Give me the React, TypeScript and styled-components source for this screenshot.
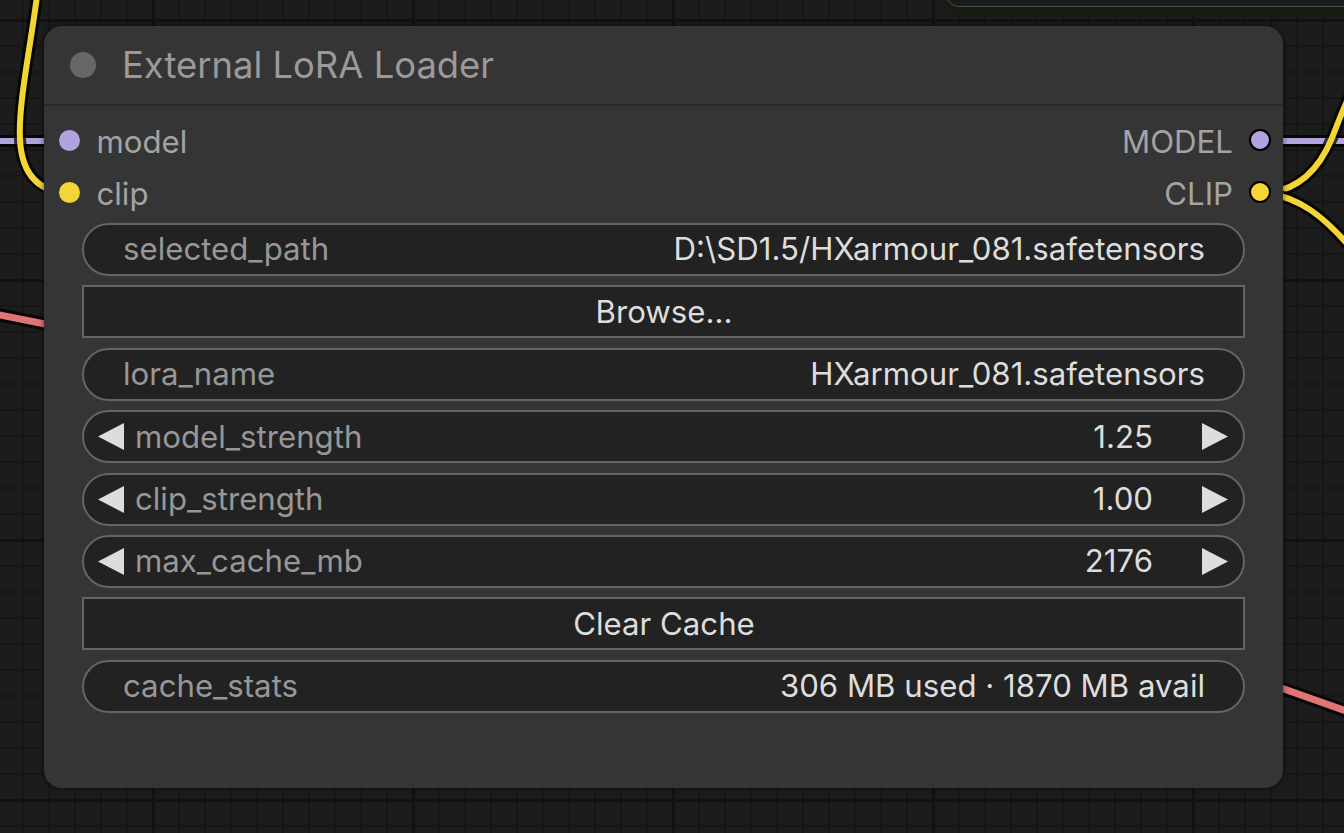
import React from "react";
import styled, { createGlobalStyle } from "styled-components";

const Global = createGlobalStyle`
  html, body { margin: 0; padding: 0; width: 1344px; height: 833px; overflow: hidden; background: #1c1c1c; }
  * { box-sizing: border-box; }
`;

const Canvas = styled.div`
  position: relative;
  width: 1344px;
  height: 833px;
  overflow: hidden;
  font-family: Inter, "Noto Sans", sans-serif;
  background-color: #1c1c1c;
  background-image:
    linear-gradient(to right, #121212 3px, transparent 3px),
    linear-gradient(to bottom, #121212 3px, transparent 3px),
    linear-gradient(to right, #161616 2px, transparent 2px),
    linear-gradient(to bottom, #161616 2px, transparent 2px);
  background-size: 260px 260px, 260px 260px, 26px 26px, 26px 26px;
  background-position: 152px 0, 0 19px, 22px 0, 0 19px;
`;

const Wires = styled.svg`
  position: absolute;
  inset: 0;
  width: 1344px;
  height: 833px;
`;

const GhostNode = styled.div`
  position: absolute;
  left: 945px;
  top: -100px;
  width: 520px;
  height: 107px;
  border-radius: 14px;
  background: #1b1b1b;
  border: 1px solid #4a4d4a;
  box-shadow: 0 11px 4px -2px #151c10;
`;

const Node = styled.div`
  position: absolute;
  display: flex;
  flex-direction: column;
  border-radius: 18px;
  background: #353535;
  box-shadow: 0 0 5px 1px rgba(0, 0, 0, 0.45);
`;

const TitleBar = styled.div`
  height: 80px;
  flex: none;
  display: flex;
  align-items: center;
  gap: 27px;
  padding: 0 0 0 26px;
  border-bottom: 2px solid #2b2b2b;
`;

const TitleDot = styled.span`
  width: 26px;
  height: 26px;
  border-radius: 50%;
  background: #676767;
`;

const Title = styled.span`
  font-size: 36.4px;
  color: #9a9a9a;
  margin-left: -1px;
`;

const Body = styled.div`
  display: flex;
  flex-direction: column;
  padding-top: 8.4px;
`;

const SlotRow = styled.div`
  height: 52px;
  display: flex;
  align-items: center;
  justify-content: space-between;
  padding: 0 12px 0 14.5px;
`;

const Slot = styled.div<{ $out?: boolean }>`
  display: flex;
  align-items: center;
  flex-direction: ${(p) => (p.$out ? "row-reverse" : "row")};
  gap: ${(p) => (p.$out ? "16px" : "17px")};
`;

const SlotDot = styled.span<{ $color: string; $out?: boolean }>`
  width: ${(p) => (p.$out ? "22px" : "21px")};
  height: ${(p) => (p.$out ? "22px" : "21px")};
  border-radius: 50%;
  background: ${(p) => p.$color};
  border: ${(p) => (p.$out ? "2.5px solid #000" : "none")};
`;

const SlotLabel = styled.span`
  font-size: 31.2px;
  color: #a3a3a3;
  line-height: 1;
  padding-top: 5px;
`;

const Widgets = styled.div`
  display: flex;
  flex-direction: column;
  gap: 9.4px;
  padding: 4.6px 38px 0;
`;

const Field = styled.div<{ $square?: boolean }>`
  height: 53px;
  display: flex;
  align-items: center;
  background: #222222;
  border: 2px solid #646464;
  border-radius: ${(p) => (p.$square ? "0" : "27px")};
  font-size: 31.2px;
  padding: 0 38px 0 39px;
  gap: 11px;
`;

const NumberField = styled(Field)`
  padding: 0 15px 0 14px;
`;

const Label = styled.span`
  color: #979797;
  white-space: nowrap;
`;

const Value = styled.span`
  color: #dddddd;
  margin-left: auto;
  white-space: nowrap;
`;

const NumValue = styled(Value)`
  margin-right: 38px;
`;

const ButtonText = styled.span`
  flex: 1;
  text-align: center;
  color: #dddddd;
`;

const Arrow = ({ dir }: { dir: "l" | "r" }) => (
  <svg width="26" height="27" viewBox="0 0 26 27" style={{ flex: "none" }}>
    {dir === "l" ? (
      <polygon points="26,0 26,27 0,13.5" fill="#dddddd" />
    ) : (
      <polygon points="0,0 0,27 26,13.5" fill="#dddddd" />
    )}
  </svg>
);

type W =
  | { kind: "text"; label: string; value: string }
  | { kind: "button"; label: string }
  | { kind: "number"; label: string; value: string };

const widgets: W[] = [
  { kind: "text", label: "selected_path", value: "D:\\SD1.5/HXarmour_081.safetensors" },
  { kind: "button", label: "Browse..." },
  { kind: "text", label: "lora_name", value: "HXarmour_081.safetensors" },
  { kind: "number", label: "model_strength", value: "1.25" },
  { kind: "number", label: "clip_strength", value: "1.00" },
  { kind: "number", label: "max_cache_mb", value: "2176" },
  { kind: "button", label: "Clear Cache" },
  { kind: "text", label: "cache_stats", value: "306 MB used · 1870 MB avail" },
];

const slots = [
  { input: "model", output: "MODEL", color: "#b2a2df" },
  { input: "clip", output: "CLIP", color: "#f3d535" },
];

const Wire = ({ d, color, w }: { d: string; color: string; w: number }) => (
  <g fill="none" strokeLinecap="round">
    <path d={d} stroke="#000" strokeOpacity={0.75} strokeWidth={w + 6} />
    <path d={d} stroke={color} strokeWidth={w} />
  </g>
);

export default function App() {
  return (
    <>
      <Global />
      <Canvas>
        <Wires viewBox="0 0 1344 833">
          <Wire d="M -10 141 L 80 141" color="#b2a2df" w={6} />
          <Wire d="M 1250 141 L 1360 141" color="#b2a2df" w={6} />
          <Wire d="M 37 -4 C 30 50, 18 105, 20 140 C 22 176, 40 192, 69 193" color="#f3d535" w={6} />
          <Wire d="M 1260 193 C 1295 193, 1318 172, 1332 138 C 1340 118, 1346 100, 1360 75" color="#f3d535" w={6} />
          <Wire d="M 1260 193 C 1295 194, 1325 214, 1362 262" color="#f3d535" w={6} />
          <Wire d="M -10 313 L 60 327" color="#e07575" w={7} />
          <Wire d="M 1270 684 L 1360 716" color="#e07575" w={7} />
        </Wires>
        <GhostNode />
        <Node style={{ left: 44, top: 26, width: 1239, height: 762 }}>
          <TitleBar>
            <TitleDot />
            <Title>External LoRA Loader</Title>
          </TitleBar>
          <Body>
            {slots.map((s) => (
              <SlotRow key={s.input}>
                <Slot>
                  <SlotDot $color={s.color} />
                  <SlotLabel>{s.input}</SlotLabel>
                </Slot>
                <Slot $out>
                  <SlotDot $color={s.color} $out />
                  <SlotLabel>{s.output}</SlotLabel>
                </Slot>
              </SlotRow>
            ))}
            <Widgets>
              {widgets.map((w) => {
                if (w.kind === "button")
                  return (
                    <Field key={w.label} $square>
                      <ButtonText>{w.label}</ButtonText>
                    </Field>
                  );
                if (w.kind === "number")
                  return (
                    <NumberField key={w.label}>
                      <Arrow dir="l" />
                      <Label>{w.label}</Label>
                      <NumValue>{w.value}</NumValue>
                      <Arrow dir="r" />
                    </NumberField>
                  );
                return (
                  <Field key={w.label}>
                    <Label>{w.label}</Label>
                    <Value>{w.value}</Value>
                  </Field>
                );
              })}
            </Widgets>
          </Body>
        </Node>
      </Canvas>
    </>
  );
}
